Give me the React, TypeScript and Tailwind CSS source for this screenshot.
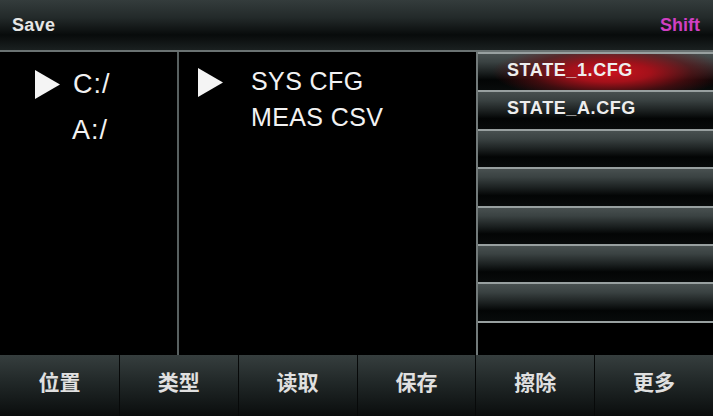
const ROW_BG =
  "bg-[linear-gradient(180deg,#485050_0%,#3a4242_22%,#1c2121_50%,#030505_72%,#080b0b_100%)]";

const FILES = ["STATE_1.CFG", "STATE_A.CFG", "", "", "", "", ""];
const SOFTKEYS = ["位置", "类型", "读取", "保存", "擦除", "更多"];

function Arrow() {
  return (
    <svg width="27" height="31" viewBox="0 0 27 31" className="shrink-0">
      <polygon points="1,1 26,15.5 1,30" fill="#f4f4f4" />
    </svg>
  );
}

export default function App() {
  return (
    <div className="flex h-[416px] w-[713px] flex-col overflow-hidden bg-black font-['Liberation_Sans','Noto_Sans_CJK_SC',sans-serif] text-[#f2f2f2]">
      {/* title bar */}
      <div className="flex h-[52px] shrink-0 items-center justify-between border-b-2 border-[#6a7272] bg-[linear-gradient(180deg,#343c3c_0%,#232a2a_35%,#080b0b_70%,#1a2020_100%)] pl-[12px] pr-[13px]">
        <span className="text-[18px] font-bold tracking-[0.3px] text-[#e6e6e6]">Save</span>
        <span className="text-[18px] font-bold text-[#d13fc2]">Shift</span>
      </div>

      <div className="flex min-h-0 flex-1">
        {/* drive list */}
        <div className="flex w-[179px] shrink-0 flex-col border-r-2 border-[#586060] pl-[34px] pt-[9px]">
          <div className="flex h-[46px] items-center">
            <Arrow />
            <span className="ml-[12px] text-[27px] tracking-[1px]">C:/</span>
          </div>
          <div className="flex h-[46px] items-center">
            <span className="ml-[38px] text-[27px] tracking-[1px]">A:/</span>
          </div>
        </div>

        {/* type list */}
        <div className="flex w-[299px] shrink-0 flex-col border-r-2 border-[#727a7a] pl-[18px] pt-[12px]">
          <div className="flex h-[36px] items-center">
            <Arrow />
            <span className="ml-[27px] text-[25px] tracking-[0.4px]">SYS CFG</span>
          </div>
          <div className="flex h-[36px] items-center">
            <span className="ml-[54px] text-[25px] tracking-[0.4px]">MEAS CSV</span>
          </div>
        </div>

        {/* file slots */}
        <div className="flex min-w-0 flex-1 flex-col">
          {FILES.map((name, i) => (
            <div
              key={i}
              className={`relative flex h-[38.4px] shrink-0 items-center border-t-2 border-[#98a0a0] pl-[29px] ${ROW_BG}`}
            >
              {i === 0 && (
                <div className="absolute inset-0 bg-[radial-gradient(ellipse_50%_80%_at_56%_50%,#cc121d_0%,#a3111a_35%,rgba(100,16,20,0.6)_70%,rgba(40,10,10,0)_100%)]" />
              )}
              <span className="relative -mt-[4px] text-[18px] font-bold tracking-[0.6px] text-[#eeeeee]">
                {name}
              </span>
            </div>
          ))}
          <div className="flex-1 border-t-2 border-[#98a0a0] bg-black" />
        </div>
      </div>

      {/* soft keys */}
      <div className="grid h-[61px] shrink-0 grid-cols-6 bg-[linear-gradient(180deg,#363e3e_0%,#232a2a_40%,#0a0d0d_100%)]">
        {SOFTKEYS.map((label, i) => (
          <div
            key={label}
            className={`flex items-center justify-center pb-[8px] ${i > 0 ? "border-l border-[#070909]" : ""}`}
          >
            <span className="font-['Noto_Sans_CJK_SC',sans-serif] text-[21px] font-bold text-[#e0e0e0]">
              {label}
            </span>
          </div>
        ))}
      </div>
    </div>
  );
}
